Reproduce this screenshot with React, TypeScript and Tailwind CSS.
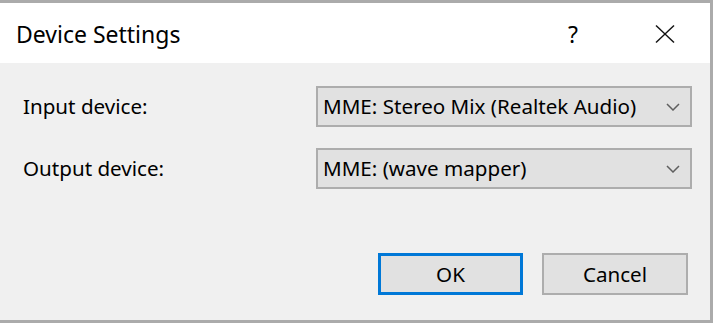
import React from "react";

const font = { fontFamily: '"Noto Sans", "Open Sans", sans-serif' };

function Chevron() {
  return (
    <svg width="14" height="8" viewBox="0 0 14 8" className="shrink-0">
      <polyline points="1,1 7,7 13,1" fill="none" stroke="#5f5f5f" strokeWidth="1.5" />
    </svg>
  );
}

function Combo({ value }: { value: string }) {
  return (
    <div className="flex h-[41px] w-[376px] items-center justify-between border-2 border-[#adadad] bg-[#e1e1e1] pl-[5px] pr-[10px] text-[20.6px] text-black">
      <span className="leading-none">{value}</span>
      <Chevron />
    </div>
  );
}

function DialogButton({ label, primary }: { label: string; primary?: boolean }) {
  return (
    <button
      className={
        primary
          ? "flex h-[42px] w-[145px] items-center justify-center border-[3px] border-[#0078d7] bg-[#e1e1e1] text-[20.6px] text-black"
          : "flex h-[42px] w-[146px] items-center justify-center border-2 border-[#adadad] bg-[#e1e1e1] text-[20.6px] text-black"
      }
    >
      {label}
    </button>
  );
}

export default function App() {
  return (
    <div
      style={font}
      className="flex h-[323px] w-[713px] flex-col border-t-[3px] border-r-[3px] border-b-[3px] border-[#ababab] bg-[#f0f0f0]"
    >
      {/* title bar */}
      <div className="flex h-[60px] shrink-0 items-center bg-white pl-[16px] pt-[2px]">
        <span className="text-[23px] text-black">Device Settings</span>
        <span className="ml-auto w-[16px] text-center text-[23px] text-black">?</span>
        <svg width="20" height="18" viewBox="0 0 20 18" className="ml-[74px] mr-[35px]">
          <line x1="1" y1="0.5" x2="19" y2="17.5" stroke="#111" strokeWidth="1.4" />
          <line x1="19" y1="0.5" x2="1" y2="17.5" stroke="#111" strokeWidth="1.4" />
        </svg>
      </div>

      {/* fields */}
      <div className="flex flex-col gap-[21px] pl-[23px] pt-[23px]">
        <div className="flex items-center">
          <span className="w-[293px] text-[20.6px] text-black">Input device:</span>
          <Combo value="MME: Stereo Mix (Realtek Audio)" />
        </div>
        <div className="flex items-center">
          <span className="w-[293px] text-[20.6px] text-black">Output device:</span>
          <Combo value="MME: (wave mapper)" />
        </div>
      </div>

      {/* actions */}
      <div className="mt-[64px] flex justify-end gap-[19px] pr-[22px]">
        <DialogButton label="OK" primary />
        <DialogButton label="Cancel" />
      </div>
    </div>
  );
}
